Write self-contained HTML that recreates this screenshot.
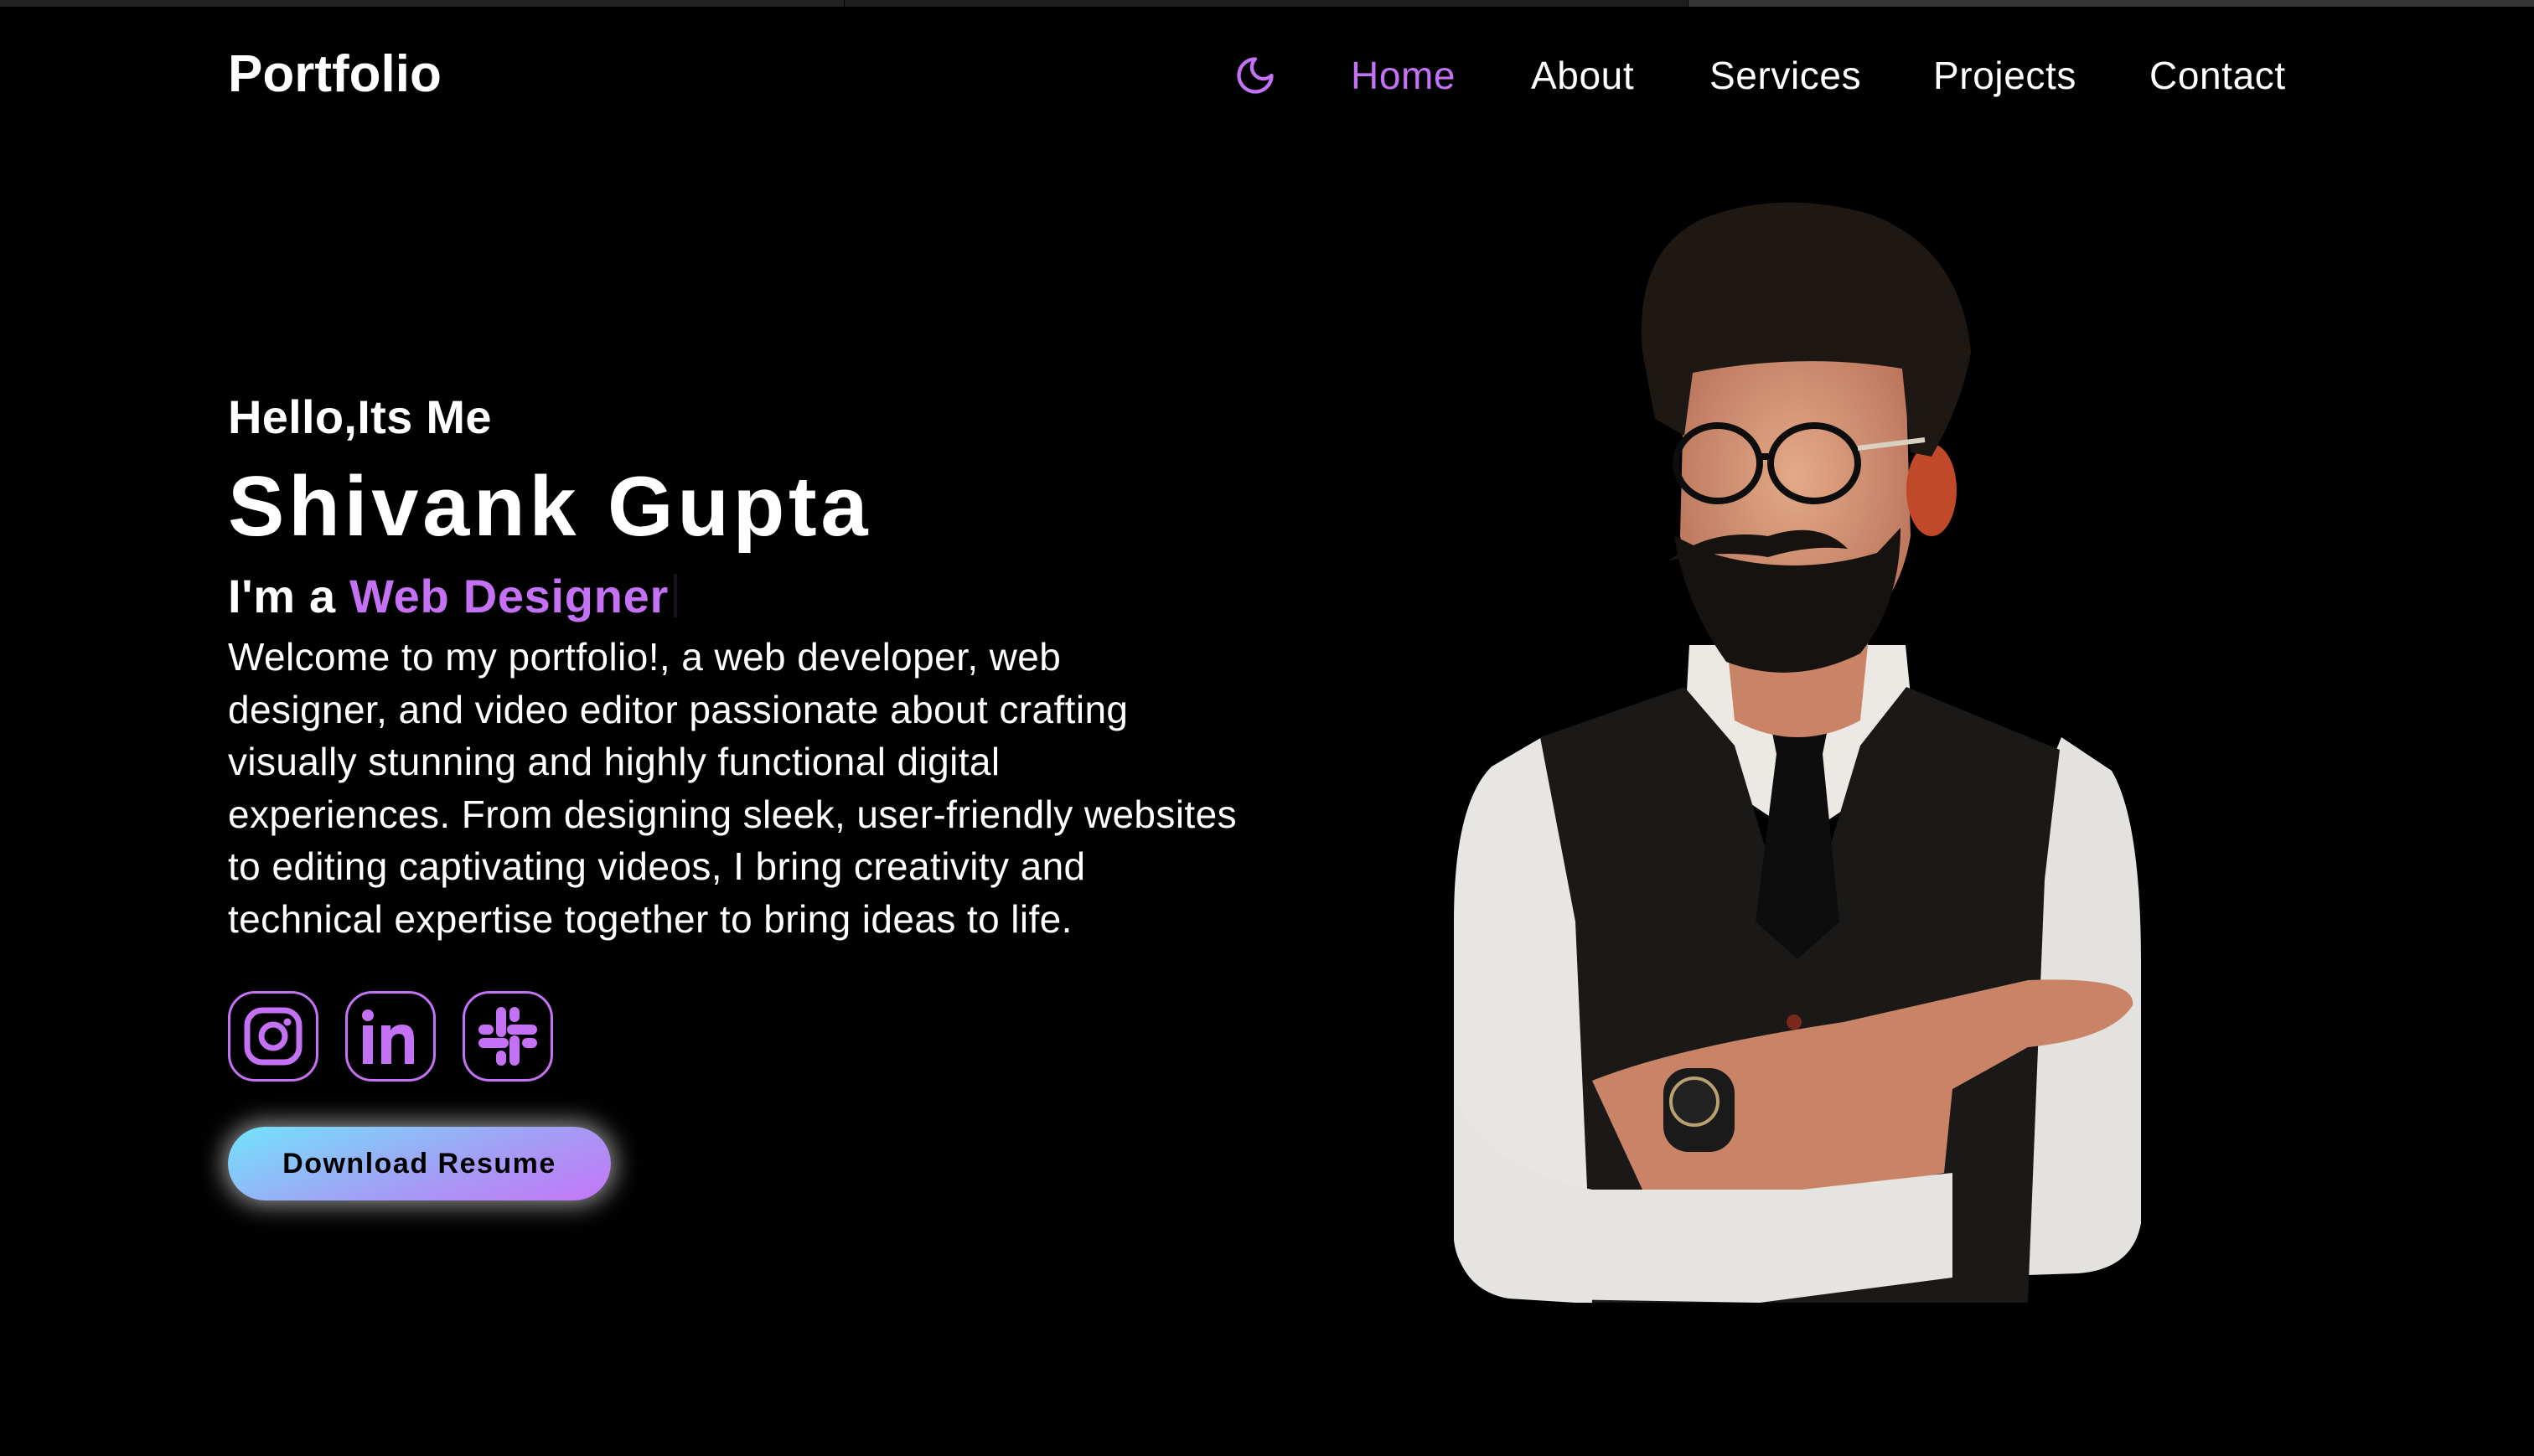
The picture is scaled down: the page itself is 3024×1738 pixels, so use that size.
<!DOCTYPE html>
<html><head><meta charset="utf-8"><style>
*{margin:0;padding:0;box-sizing:border-box}
html,body{width:3024px;height:1738px;background:#000;overflow:hidden;font-family:"Liberation Sans",sans-serif;color:#fff}
.bar{position:absolute;top:0;height:8px}
.a{position:absolute;white-space:nowrap}
.nav{position:absolute;top:62px;font-size:46px;line-height:56px;letter-spacing:0.6px}
.ic{position:absolute;top:1183px;width:108px;height:108px;border:3px solid #c471f5;border-radius:32px}
p.t{position:absolute;left:272px;top:753px;font-size:46px;line-height:62.5px;white-space:nowrap;letter-spacing:0.4px}
</style></head><body>
<div class="bar" style="left:0;width:1007px;background:#212121"></div>
<div class="bar" style="left:1008px;width:1006px;background:#1e1e1e"></div>
<div class="bar" style="left:2015px;width:1009px;background:#343434"></div>

<div class="a" style="left:272px;top:54px;font-size:62px;font-weight:bold;line-height:70px">Portfolio</div>
<svg class="a" style="left:1472px;top:64px" width="52" height="52" viewBox="0 0 24 24" fill="none" stroke="#c471f5" stroke-width="2" stroke-linecap="round" stroke-linejoin="round"><path d="M12 3a6 6 0 0 0 9 9 9 9 0 1 1-9-9Z"/></svg>
<div class="nav" style="left:1612px;color:#c471f5">Home</div>
<div class="nav" style="left:1827px">About</div>
<div class="nav" style="left:2040px">Services</div>
<div class="nav" style="left:2307px">Projects</div>
<div class="nav" style="left:2565px">Contact</div>

<div class="a" style="left:272px;top:466px;font-size:56px;font-weight:bold;line-height:64px;letter-spacing:0.3px">Hello,Its Me</div>
<div class="a" style="left:272px;top:550px;font-size:101px;font-weight:bold;line-height:110px;letter-spacing:4.7px">Shivank Gupta</div>
<div class="a" style="left:272px;top:680px;font-size:56px;font-weight:bold;line-height:64px;letter-spacing:0.7px">I'm a <span style="color:#c471f5">Web Designer</span><span style="display:inline-block;width:4px;height:52px;background:#1a1020;margin-left:6px;vertical-align:-6px"></span></div>

<p class="t">Welcome to my portfolio!, a web developer, web<br>designer, and video editor passionate about crafting<br>visually stunning and highly functional digital<br>experiences. From designing sleek, user-friendly websites<br>to editing captivating videos, I bring creativity and<br>technical expertise together to bring ideas to life.</p>

<div class="ic" style="left:272px"><svg width="102" height="102" viewBox="0 0 102 102"><rect x="20" y="20" width="62" height="62" rx="18" fill="none" stroke="#c471f5" stroke-width="7"/><circle cx="51" cy="51" r="14" fill="none" stroke="#c471f5" stroke-width="7"/><circle cx="68" cy="34" r="4.5" fill="#c471f5"/></svg></div>
<div class="ic" style="left:412px"><svg width="102" height="102" viewBox="0 0 102 102" fill="#c471f5"><circle cx="24" cy="26" r="7"/><rect x="18" y="38" width="12" height="46"/><path d="M40 38h11v6c3-5 8-7 14-7 10 0 14 6 14 17v30H68V57c0-6-2-9-7-9s-9 3-9 10v26H40Z"/></svg></div>
<div class="ic" style="left:552px"><svg width="102" height="102" viewBox="0 0 102 102" fill="#c471f5">
<rect x="37" y="16" width="12" height="36" rx="6"/>
<rect x="53" y="50" width="12" height="36" rx="6"/>
<rect x="16" y="53" width="36" height="12" rx="6"/>
<rect x="50" y="37" width="36" height="12" rx="6"/>
<rect x="16" y="37" width="18" height="12" rx="6"/>
<rect x="53" y="16" width="12" height="18" rx="6"/>
<rect x="68" y="53" width="18" height="12" rx="6"/>
<rect x="37" y="68" width="12" height="18" rx="6"/>
</svg></div>

<div class="a" style="left:272px;top:1345px;width:457px;height:88px;border-radius:44px;background:linear-gradient(160deg,#72e4fb,#a59bf5 60%,#c476f6);box-shadow:0 0 28px 6px rgba(255,255,255,.55);color:#000;font-size:34px;font-weight:bold;letter-spacing:1.5px;text-align:center;line-height:88px">Download Resume</div>

<svg class="a" style="left:0;top:0" width="3024" height="1738">
<defs><radialGradient id="sk" cx="50%" cy="40%" r="60%"><stop offset="0" stop-color="#e3aa88"/><stop offset="1" stop-color="#b9735a"/></radialGradient></defs>
<path d="M1840 880 L1780 915 Q1735 960 1735 1100 L1735 1480 Q1745 1540 1800 1550 L1880 1555 L2000 1555 L2000 1200 Z" fill="#e8e6e2"/>
<path d="M2460 880 L2520 920 Q2555 980 2555 1150 L2555 1460 Q2545 1515 2480 1520 L2330 1525 L2330 1200 Z" fill="#e4e2de"/>
<path d="M2016 770 L2274 770 L2285 880 L2240 940 L2150 1000 L2060 940 L2010 880 Z" fill="#ece9e4"/>
<path d="M1838 880 L2010 820 L2070 890 L2145 1140 L2220 890 L2275 820 L2458 895 L2440 1050 L2420 1555 L1900 1555 L1880 1100 Z" fill="#1a1918"/>
<path d="M2110 850 L2185 850 L2175 900 L2195 1100 L2145 1145 L2095 1100 L2120 900 Z" fill="#0d0d0d"/>
<circle cx="2141" cy="1220" r="9" fill="#7a2a1a"/>
<path d="M1900 1290 Q2000 1250 2200 1220 L2420 1170 Q2550 1165 2545 1200 Q2520 1240 2420 1250 L2330 1300 L2320 1400 L2120 1440 L1960 1420 Z" fill="#c98467"/>
<path d="M1735 1300 Q1760 1390 1900 1420 L2150 1420 L2330 1400 L2330 1525 L2100 1555 L1800 1550 Q1740 1530 1735 1480 Z" fill="#e6e4e0"/>
<rect x="1985" y="1275" width="85" height="100" rx="30" fill="#1a1a1a"/>
<circle cx="2022" cy="1315" r="28" fill="#222" stroke="#b8a070" stroke-width="4"/>
<path d="M2060 760 L2230 760 L2220 860 Q2145 900 2070 860 Z" fill="#c98467"/>
<path d="M2010 440 Q2140 400 2274 440 L2280 640 Q2260 760 2140 790 Q2030 770 2005 640 Z" fill="url(#sk)"/>
<ellipse cx="2305" cy="585" rx="30" ry="55" fill="#c0492a"/>
<path d="M1960 420 Q1950 300 2030 262 Q2120 225 2230 255 Q2340 295 2352 420 Q2342 480 2305 545 L2280 540 L2270 440 Q2150 420 2020 445 L2010 520 L1975 500 Z" fill="#1e1814"/>
<g fill="none" stroke="#0d0d0d" stroke-width="8"><ellipse cx="2050" cy="553" rx="50" ry="45"/><ellipse cx="2165" cy="553" rx="52" ry="45"/><line x1="2100" y1="545" x2="2113" y2="545"/></g>
<line x1="2217" y1="535" x2="2297" y2="525" stroke="#d8d0c0" stroke-width="6"/>
<path d="M1998 640 Q2010 720 2060 790 Q2140 820 2220 780 Q2268 720 2268 630 L2240 660 Q2140 690 2040 660 Z" fill="#151210"/>
<path d="M1990 670 Q2040 630 2110 640 Q2170 620 2205 655 Q2160 650 2110 665 Q2050 655 1990 670 Z" fill="#151210"/>
</svg>
</body></html>
